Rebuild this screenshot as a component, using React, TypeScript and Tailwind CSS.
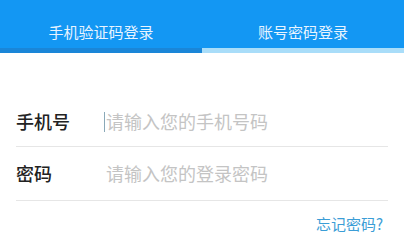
import React from 'react';

const font = { fontFamily: '"Noto Sans CJK SC", "Noto Sans", sans-serif' };

export default function App() {
  return (
    <div className="w-[413px] h-[243px] bg-white overflow-hidden" style={font}>
      {/* Tabs */}
      <div className="w-[404px] flex bg-[#1397f3]">
        <div className="flex-1 flex flex-col">
          <div className="h-[48px] pt-[22px] text-center text-[15px] leading-[20px] text-[#e8f4ff]">
            手机验证码登录
          </div>
          <div className="h-[5px] bg-[#1a86d8]" />
        </div>
        <div className="flex-1 flex flex-col">
          <div className="h-[48px] pt-[22px] text-center text-[15px] leading-[20px] text-[#e8f4ff]">
            账号密码登录
          </div>
          <div className="h-[5px] bg-[#a9ddf9]" />
        </div>
      </div>

      {/* Form */}
      <div className="mt-[44px] pl-[16px] w-[388px]">
        <div className="h-[50px] flex items-center border-b border-[#e6e6e6]">
          <span className="w-[88px] text-[18px] font-medium text-[#222]">手机号</span>
          <span className="h-[20px] w-px bg-[#8aa9b8] mr-[1px]" />
          <span className="text-[18px] text-[#c4c4c4]">请输入您的手机号码</span>
        </div>
        <div className="h-[54px] flex items-center border-b border-[#e6e6e6]">
          <span className="w-[90px] text-[18px] font-medium text-[#222]">密码</span>
          <span className="text-[18px] text-[#c4c4c4]">请输入您的登录密码</span>
        </div>
      </div>

      <div className="w-[388px] mt-[13px] flex justify-end pr-[5px]">
        <span className="text-[15px] leading-[20px] text-[#3b9dd6]">忘记密码?</span>
      </div>
    </div>
  );
}
